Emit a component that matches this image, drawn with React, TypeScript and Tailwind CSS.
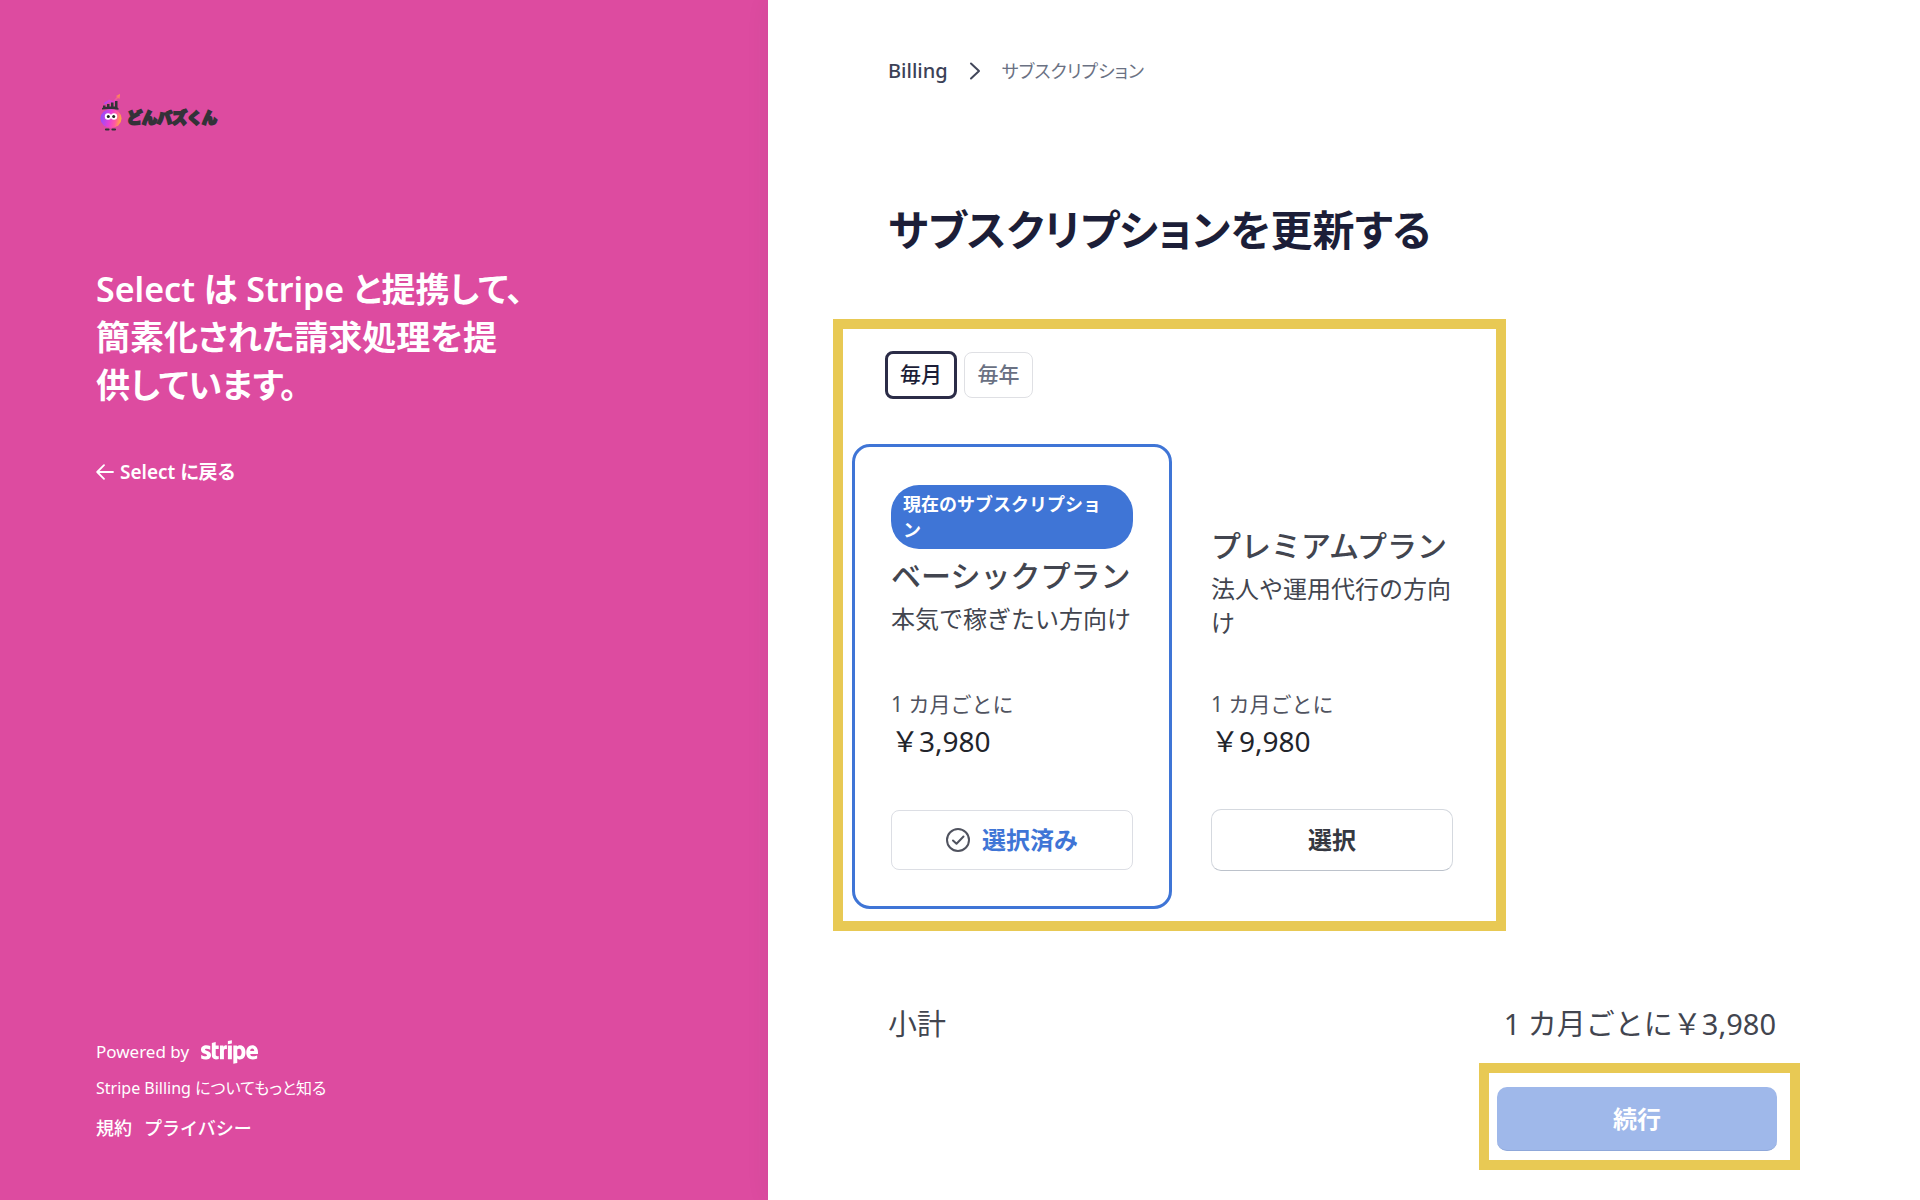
import React from "react";
import { FaStripe } from "react-icons/fa";

function Mascot() {
  return (
    <svg viewBox="0 0 24 38" className="h-[38px] w-6 shrink-0" aria-hidden="true">
      <defs>
        <linearGradient id="body" x1="0" y1="0.3" x2="1" y2="0.5">
          <stop offset="0" stopColor="#8b4dff" />
          <stop offset="0.45" stopColor="#e53fd6" />
          <stop offset="0.75" stopColor="#ff5aa0" />
          <stop offset="1" stopColor="#ffb03a" />
        </linearGradient>
        <linearGradient id="arrow" x1="0" y1="1" x2="1" y2="0">
          <stop offset="0" stopColor="#a04dff" />
          <stop offset="0.5" stopColor="#f03fc0" />
          <stop offset="1" stopColor="#ffa03a" />
        </linearGradient>
      </defs>
      <path d="M5 10 10 6.500l4 1.500 4-4-1-1 4-2-.5 5-1.500-1-5 5.500-4-1.500-4 2.500z" fill="url(#arrow)" />
      <path d="M3 16.500q-.5-1.500 1-2V12.500h2.500v1.500l1.500-.3V11h2.500v2.500h1.500V9.500h2.500v4h1.500V8h2.500v6.500q1.500.5 1 2.300-8.500-1.500-16.500-.3z" fill="#333238" />
      <ellipse cx="12" cy="25.500" rx="10.500" ry="9.500" fill="url(#body)" />
      <circle cx="9" cy="23.500" r="3.200" fill="#fff" />
      <circle cx="15" cy="23.500" r="3.200" fill="#fff" />
      <circle cx="9.300" cy="23.500" r="1.500" fill="#222" />
      <circle cx="14.700" cy="23.500" r="1.500" fill="#222" />
      <path d="M7 36.500h2.500M13.500 36.500H16" stroke="#333238" strokeWidth="2.200" strokeLinecap="round" />
    </svg>
  );
}

function BackArrow() {
  return (
    <svg viewBox="0 0 18 16" className="h-4 w-[18px]" fill="none" stroke="currentColor" strokeWidth="1.800" strokeLinecap="round" strokeLinejoin="round" aria-hidden="true">
      <path d="M17 8H1.500M8 1.200 1.200 8 8 14.800" />
    </svg>
  );
}

function Chevron() {
  return (
    <svg viewBox="0 0 12 18" className="h-[18px] w-3 text-[#42475a]" fill="none" stroke="currentColor" strokeWidth="2" strokeLinecap="round" strokeLinejoin="round" aria-hidden="true">
      <path d="m2 1.500 8 7.500-8 7.500" />
    </svg>
  );
}

function CheckCircle() {
  return (
    <svg viewBox="0 0 24 24" className="size-6 text-[#50535f]" fill="none" stroke="currentColor" strokeWidth="2" strokeLinecap="round" strokeLinejoin="round" aria-hidden="true">
      <circle cx="12" cy="12" r="11" />
      <path d="m7 12.500 3.500 3.300L17.500 8.500" />
    </svg>
  );
}

function Sidebar() {
  return (
    <aside className="flex w-2/5 flex-col bg-[#dd4ba0] px-24 pt-[93px] pb-[54px] text-white">
      <div className="flex items-center gap-1 pl-[3px]">
        <Mascot />
        <span className="pt-2.5 font-['Noto_Sans_CJK_JP',sans-serif] text-[15px] leading-6 font-black text-[#333238] [-webkit-text-stroke:2px_#333238]">
          どんバズくん
        </span>
      </div>
      <h1 className="mt-[134px] text-[34px] leading-[48px] font-semibold whitespace-nowrap [font-feature-settings:'palt']">
        <span className="block">Select は Stripe と提携して、</span>
        <span className="block">簡素化された請求処理を提</span>
        <span className="block">供しています。</span>
      </h1>
      <a href="#back" className="mt-12 flex items-center gap-1.5 text-[19px] leading-[30px] font-semibold [font-feature-settings:'palt']">
        <BackArrow />
        Select に戻る
      </a>
      <footer className="mt-auto">
        <a href="#stripe" className="flex h-9 items-center gap-3 text-[17px]">
          Powered by
          <FaStripe className="h-12 w-[57px]" aria-label="stripe" />
        </a>
        <a href="#learn" className="flex h-9 items-center text-[16px] [font-feature-settings:'palt']">
          Stripe Billing についてもっと知る
        </a>
        <nav className="mt-1 flex h-9 items-center gap-3 text-[18px] font-medium">
          <a href="#terms">規約</a>
          <a href="#privacy">プライバシー</a>
        </nav>
      </footer>
    </aside>
  );
}

type PlanProps = {
  name: string;
  description: string;
  price: string;
  current?: boolean;
};

function Plan({ name, description, price, current = false }: PlanProps) {
  return (
    <article
      className={
        current
          ? "flex w-80 shrink-0 flex-col rounded-[18px] border-3 border-[#3f75d6] px-9 pt-[37px] pb-9"
          : "flex w-80 shrink-0 flex-col border-3 border-transparent px-9 pt-[37px] pb-8"
      }
    >
      <div className={current ? "flex h-[158px] flex-col justify-end pb-1.5" : "flex h-[158px] flex-col justify-end pb-0.5"}>
        {current && (
          <p className="rounded-[28px] bg-[#3f75d6] py-1.5 pr-5 pl-3 text-[18px] leading-[26px] font-bold break-all text-white">
            現在のサブスクリプション
          </p>
        )}
        <h3 className="text-[30px] leading-[53px] font-medium whitespace-nowrap">{name}</h3>
        <p className="text-[24px] leading-[34px] break-all">{description}</p>
      </div>
      <p className="mt-[47px] text-[21px] leading-[30px] text-[#50535f]">1 カ月ごとに</p>
      <p className="text-[28px] leading-[44px] text-[#22242b]">{price}</p>
      {current ? (
        <button type="button" className="mt-[47px] flex h-[60px] items-center justify-center gap-3 rounded-lg border border-[#dcdee4] text-[24px] font-semibold text-[#3f75d6]">
          <CheckCircle />
          選択済み
        </button>
      ) : (
        <button type="button" className="mt-[46px] flex h-[62px] items-center justify-center rounded-[10px] border border-[#d5d9df] border-b-[#bcc2cb] text-[24px] font-semibold text-[#353841]">
          選択
        </button>
      )}
    </article>
  );
}

export default function App() {
  return (
    <div className="flex min-h-screen bg-white font-['Noto_Sans','Noto_Sans_CJK_JP',sans-serif] text-[#42454f]">
      <Sidebar />
      <main className="z-10 flex-1 pt-14 pr-[120px] pl-[65px] shadow-[0_0_24px_rgba(46,61,73,0.06)]">
        <nav aria-label="breadcrumb" className="flex h-[30px] items-center gap-[21px] pl-[55px] text-[20px]">
          <a href="#billing" className="font-medium text-[#3c4257]">Billing</a>
          <Chevron />
          <span className="text-[18px] text-[#6a7183] [font-feature-settings:'palt']">サブスクリプション</span>
        </nav>
        <h2 className="mt-28 pl-[55px] text-[42px] leading-16 font-semibold text-[#1c1e38] [font-feature-settings:'palt']">
          サブスクリプションを更新する
        </h2>
        <section className="mt-[57px] w-[673px] border-10 border-[#e8c954] pt-[22px] pb-3 pl-[9px]">
          <div className="flex items-center gap-[7px] pl-[33px] text-[21px] font-medium">
            <button type="button" className="h-12 w-[72px] rounded-lg border-3 border-[#2b2c47] text-[#1c1e38]">毎月</button>
            <button type="button" className="h-[46px] w-[69px] rounded-lg border border-[#dfe0e4] text-[#6a7183]">毎年</button>
          </div>
          <div className="mt-[45px] flex">
            <Plan current name="ベーシックプラン" description="本気で稼ぎたい方向け" price={"\uFFE53,980"} />
            <Plan name="プレミアムプラン" description="法人や運用代行の方向け" price={"\uFFE59,980"} />
          </div>
        </section>
        <div className="mt-[71px] flex items-center justify-between pr-6 pl-[55px] text-[29px] leading-[44px]">
          <span>小計</span>
          <span>{"1 カ月ごとに\uFFE53,980"}</span>
        </div>
        <div className="mt-[17px] ml-auto w-[321px] border-10 border-[#e8c954] pt-[14px] pr-[13px] pb-[9px] pl-2">
          <button type="button" className="h-16 w-full rounded-[10px] border-b border-[#8fa8da] bg-[#9fb8ea] text-[24px] font-bold text-white">
            続行
          </button>
        </div>
      </main>
    </div>
  );
}
